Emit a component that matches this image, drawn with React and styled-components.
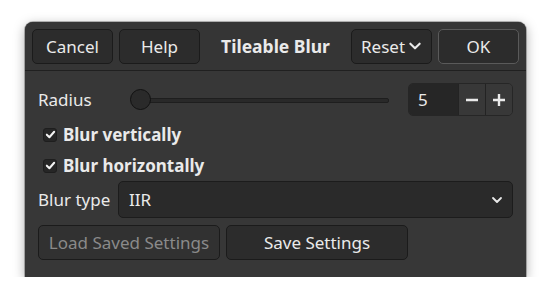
import React, { useState } from 'react'
import styled, { createGlobalStyle } from 'styled-components'

const GlobalStyle = createGlobalStyle`
  html, body {
    margin: 0;
    padding: 0;
    background: #ffffff;
  }
  body {
    font-family: "Noto Sans", "DejaVu Sans", sans-serif;
  }
`

const Page = styled.div`
  padding: 22px 0 0 25px;
`

const Dialog = styled.div`
  width: 501px;
  height: 255px;
  background: #373737;
  border-radius: 8px 8px 0 0;
  box-shadow: 0 3px 12px rgba(0, 0, 0, 0.35), 0 0 0 1px rgba(0, 0, 0, 0.25);
  color: #eaeaea;
  font-size: 17px;
  box-sizing: border-box;
  display: flex;
  flex-direction: column;
`

const Header = styled.div`
  height: 49px;
  box-sizing: border-box;
  padding: 7px 7px;
  display: flex;
  align-items: center;
  border-bottom: 1px solid #202020;
  background: #353535;
  border-radius: 8px 8px 0 0;
`

const Group = styled.div`
  display: flex;
  gap: 6px;
`

const Title = styled.div`
  flex: 1;
  text-align: center;
  font-weight: 700;
  font-size: 17.5px;
`

const Button = styled.button`
  height: 35px;
  width: ${p => p.$w || 81}px;
  box-sizing: border-box;
  border: 1px solid ${p => (p.$default ? '#5a5a5a' : '#1b1b1b')};
  border-radius: 5px;
  color: ${p => (p.disabled ? '#8a8a8a' : '#eaeaea')};
  background: ${p => (p.disabled ? '#313131' : '#2c2c2c')};
  font-family: inherit;
  font-size: 17px;
  padding: 0;
  display: flex;
  align-items: center;
  justify-content: center;
  gap: 3px;
`

const Body = styled.div`
  padding: 12px 13px 16px 13px;
  display: flex;
  flex-direction: column;
  gap: 3px;
`

const Row = styled.div`
  display: flex;
  align-items: center;
  height: ${p => p.$h || 28}px;
`

const Label = styled.span`
  width: ${p => p.$w}px;
  flex: none;
`

const SliderTrack = styled.div`
  position: relative;
  width: 259px;
  height: 20px;
  margin-left: 12px;
  flex: none;
  &::before {
    content: '';
    position: absolute;
    left: 10px;
    right: 0;
    top: 8px;
    height: 3px;
    background: #292929;
    border: 1px solid #1e1e1e;
    border-radius: 2px;
  }
`

const Knob = styled.div`
  position: absolute;
  left: 0;
  top: -1px;
  width: 21px;
  height: 21px;
  border-radius: 50%;
  background: #2a2a2a;
  border: 1px solid #111;
  box-sizing: border-box;
`

const Spin = styled.div`
  margin-left: auto;
  display: flex;
  height: 33px;
  box-sizing: border-box;
  border: 1px solid #262626;
  border-radius: 5px;
  overflow: hidden;
`

const SpinEntry = styled.div`
  width: 49px;
  background: #262626;
  display: flex;
  align-items: center;
  padding-left: 9px;
  box-sizing: border-box;
`

const SpinButton = styled.div`
  width: 26px;
  background: #383838;
  border-left: 1px solid #232323;
  display: flex;
  align-items: center;
  justify-content: center;
`

const CheckRow = styled.label`
  display: flex;
  align-items: center;
  height: 28px;
  box-sizing: border-box;
  padding: 3px 0 0 5px;
  font-weight: 700;
  gap: 6px;
`

const CheckBox = styled.span`
  width: 14px;
  height: 14px;
  box-sizing: border-box;
  border: 1px solid #1e1e1e;
  border-radius: 3px;
  background: #262626;
  display: flex;
  align-items: center;
  justify-content: center;
`

const Combo = styled.div`
  flex: 1;
  height: 37px;
  box-sizing: border-box;
  background: #2a2a2a;
  border: 1px solid #1c1c1c;
  border-radius: 5px;
  display: flex;
  align-items: center;
  padding: 0 9px 0 10px;
  justify-content: space-between;
`

const ButtonRow = styled.div`
  display: flex;
  gap: 6px;
  margin-top: 4px;
`

const Chevron = ({ size = 12 }) => (
  <svg width={size} height={size} viewBox="0 0 12 12">
    <path d="M2 4 L6 8 L10 4" fill="none" stroke="#eaeaea" strokeWidth="1.8" strokeLinecap="round" strokeLinejoin="round" />
  </svg>
)

const Check = () => (
  <svg width="11" height="11" viewBox="0 0 12 12">
    <path d="M2 6.2 L4.8 9 L10 3" fill="none" stroke="#f2f2f2" strokeWidth="2.2" strokeLinecap="round" strokeLinejoin="round" />
  </svg>
)

const Minus = () => (
  <svg width="14" height="14" viewBox="0 0 14 14">
    <path d="M1 7 H13" stroke="#eaeaea" strokeWidth="2.4" />
  </svg>
)

const Plus = () => (
  <svg width="14" height="14" viewBox="0 0 14 14">
    <path d="M1 7 H13 M7 1 V13" stroke="#eaeaea" strokeWidth="2.4" />
  </svg>
)

export default function App() {
  const [vertical] = useState(true)
  const [horizontal] = useState(true)

  return (
    <>
      <GlobalStyle />
      <Page>
        <Dialog>
          <Header>
            <Group>
              <Button>Cancel</Button>
              <Button>Help</Button>
            </Group>
            <Title>Tileable Blur</Title>
            <Group>
              <Button>Reset <Chevron size={14} /></Button>
              <Button $default>OK</Button>
            </Group>
          </Header>
          <Body>
            <Row $h={33}>
              <Label $w={80}>Radius</Label>
              <SliderTrack>
                <Knob />
              </SliderTrack>
              <Spin>
                <SpinEntry>5</SpinEntry>
                <SpinButton><Minus /></SpinButton>
                <SpinButton><Plus /></SpinButton>
              </Spin>
            </Row>
            <CheckRow>
              <CheckBox>{vertical && <Check />}</CheckBox>
              Blur vertically
            </CheckRow>
            <CheckRow>
              <CheckBox>{horizontal && <Check />}</CheckBox>
              Blur horizontally
            </CheckRow>
            <Row $h={37}>
              <Label $w={80}>Blur type</Label>
              <Combo>
                <span>IIR</span>
                <Chevron />
              </Combo>
            </Row>
            <ButtonRow>
              <Button $w={182} disabled>Load Saved Settings</Button>
              <Button $w={182}>Save Settings</Button>
            </ButtonRow>
          </Body>
        </Dialog>
      </Page>
    </>
  )
}
